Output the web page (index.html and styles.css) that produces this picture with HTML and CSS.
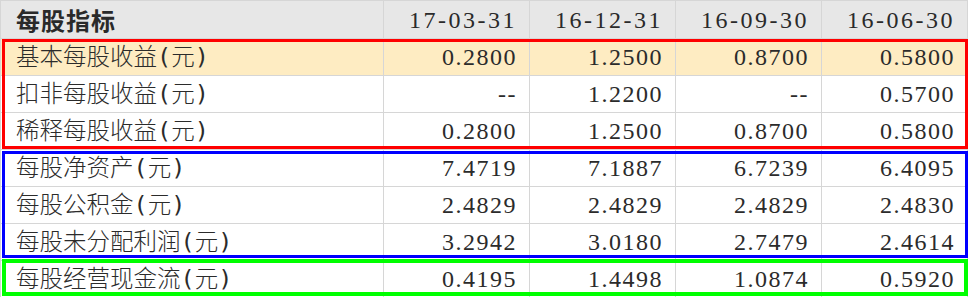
FILE: index.html
```html
<!DOCTYPE html>
<html>
<head>
<meta charset="utf-8">
<link rel="stylesheet" href="styles.css">
</head>
<body>
<div class="sheet">
<table class="grid">
<colgroup>
<col class="c-label"><col class="c-num"><col class="c-num"><col class="c-num"><col class="c-num">
</colgroup>
<thead>
<tr class="head"><th class="label">每股指标</th><th>17-03-31</th><th>16-12-31</th><th>16-09-30</th><th>16-06-30</th></tr>
</thead>
<tbody>
<tr class="hl"><td class="label">基本每股收益(元)</td><td>0.2800</td><td>1.2500</td><td>0.8700</td><td>0.5800</td></tr>
<tr><td class="label">扣非每股收益(元)</td><td>--</td><td>1.2200</td><td>--</td><td>0.5700</td></tr>
<tr><td class="label">稀释每股收益(元)</td><td>0.2800</td><td>1.2500</td><td>0.8700</td><td>0.5800</td></tr>
<tr><td class="label">每股净资产(元)</td><td>7.4719</td><td>7.1887</td><td>6.7239</td><td>6.4095</td></tr>
<tr><td class="label">每股公积金(元)</td><td>2.4829</td><td>2.4829</td><td>2.4829</td><td>2.4830</td></tr>
<tr><td class="label">每股未分配利润(元)</td><td>3.2942</td><td>3.0180</td><td>2.7479</td><td>2.4614</td></tr>
<tr><td class="label">每股经营现金流(元)</td><td>0.4195</td><td>1.4498</td><td>1.0874</td><td>0.5920</td></tr>
</tbody>
</table>
<div class="box box-red"></div>
<div class="box box-blue"></div>
<div class="box box-green"></div>
</div>
</body>
</html>
```
FILE: styles.css
```css
html, body {
  margin: 0;
  padding: 0;
  background: #ffffff;
}
.sheet {
  position: relative;
  width: 970px;
  height: 297px;
  overflow: hidden;
}
.grid {
  border-collapse: collapse;
  table-layout: fixed;
  width: 968px;
  font-family: "Liberation Serif", "Noto Sans CJK SC", serif;
  font-size: 24px;
  color: #2b2b2b;
}
.c-label { width: 383px; }
.c-num { width: 146px; }
.grid th, .grid td {
  border: 1px solid #d6d6d6;
  height: 36px;
  padding: 0 12px 0 14px;
  text-align: right;
  white-space: nowrap;
  line-height: 36px;
  letter-spacing: 1.5px;
  font-weight: normal;
}
.grid .head th {
  background: #e7e7e7;
  height: 37px;
  font-size: 24px;
  letter-spacing: 2.5px;
  color: #2a2a2a;
}
.grid .label {
  text-align: left;
  padding-left: 15px;
  font-family: "DejaVu Sans Mono", "Noto Sans CJK SC", sans-serif;
  font-size: 23.5px;
  letter-spacing: 0;
  font-weight: 300;
}
.grid .head th.label {
  font-family: "Noto Sans CJK SC", sans-serif;
  font-weight: bold;
  font-size: 24px;
  letter-spacing: 1px;
}
.grid .hl td {
  background: #feecc2;
}
.box {
  position: absolute;
  left: 2px;
  width: 966px;
  box-sizing: border-box;
}
.box-red {
  top: 39px;
  height: 110px;
  border: 3px solid #ff0000;
}
.box-blue {
  top: 151px;
  height: 107px;
  border: 3px solid #0000ff;
}
.box-green {
  top: 259px;
  height: 37px;
  border: 4px solid #00ff00;
}
```
